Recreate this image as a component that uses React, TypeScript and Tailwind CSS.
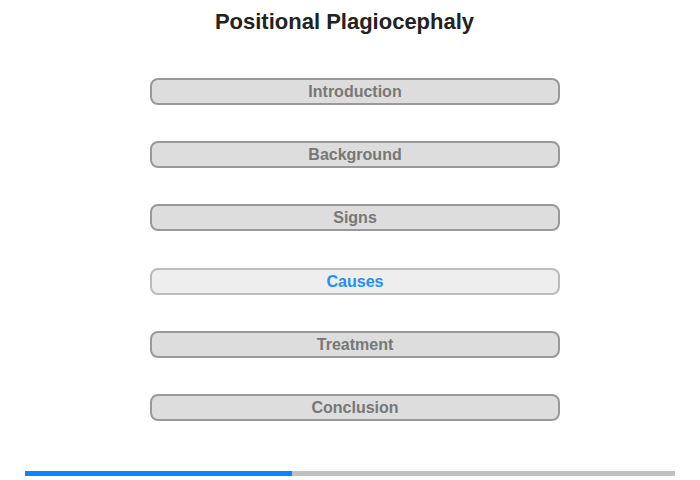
import React from 'react';

const sections = ['Introduction', 'Background', 'Signs', 'Causes', 'Treatment', 'Conclusion'];

export default function App() {
  const active = 'Causes';

  return (
    <div className="w-[700px] h-[480px] bg-white flex flex-col font-['Liberation_Sans',Arial,sans-serif]">
      <h1 className="mt-[9px] h-[26px] pr-[11px] text-center text-[22px] leading-[26px] font-bold text-[#222]">
        Positional Plagiocephaly
      </h1>
      <div className="mt-[43px] flex flex-col gap-[36.2px] pl-[150px]">
        {sections.map((s) => (
          <button
            key={s}
            className={
              s === active
                ? 'w-[410px] h-[27px] rounded-[8px] border-2 border-[#bbb] bg-[#eee] text-[16px] font-bold text-[#1e90ff] leading-[23px]'
                : 'w-[410px] h-[27px] rounded-[8px] border-2 border-[#999] bg-[#ddd] text-[16px] font-bold text-[#777] leading-[23px]'
            }
          >
            {s}
          </button>
        ))}
      </div>
      <div className="mt-[50px] ml-[25px] w-[650px] h-[5px] bg-[#c0c0c0] flex">
        <div className="w-[267px] h-full bg-[#0a84ff]" />
      </div>
    </div>
  );
}
